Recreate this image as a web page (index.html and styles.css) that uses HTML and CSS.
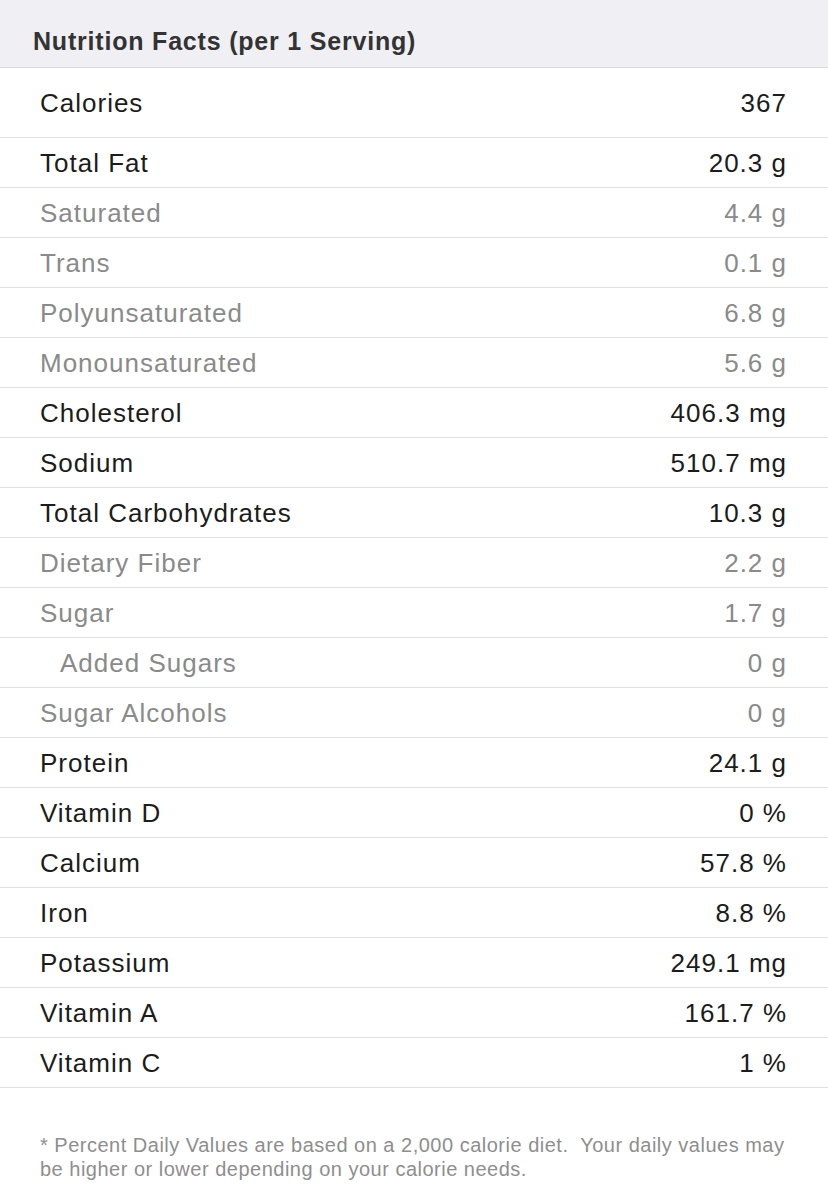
FILE: index.html
```html
<!DOCTYPE html>
<html>
<head>
<meta charset="utf-8">
<link rel="stylesheet" href="styles.css">
</head>
<body>
<div class="panel">
  <div class="header">Nutrition Facts (per 1 Serving)</div>
  <div class="row cal"><span>Calories</span><span>367</span></div>
  <div class="row"><span>Total Fat</span><span>20.3 g</span></div>
  <div class="row sub"><span>Saturated</span><span>4.4 g</span></div>
  <div class="row sub"><span>Trans</span><span>0.1 g</span></div>
  <div class="row sub"><span>Polyunsaturated</span><span>6.8 g</span></div>
  <div class="row sub"><span>Monounsaturated</span><span>5.6 g</span></div>
  <div class="row"><span>Cholesterol</span><span>406.3 mg</span></div>
  <div class="row"><span>Sodium</span><span>510.7 mg</span></div>
  <div class="row"><span>Total Carbohydrates</span><span>10.3 g</span></div>
  <div class="row sub"><span>Dietary Fiber</span><span>2.2 g</span></div>
  <div class="row sub"><span>Sugar</span><span>1.7 g</span></div>
  <div class="row sub indent"><span>Added Sugars</span><span>0 g</span></div>
  <div class="row sub"><span>Sugar Alcohols</span><span>0 g</span></div>
  <div class="row"><span>Protein</span><span>24.1 g</span></div>
  <div class="row"><span>Vitamin D</span><span>0 %</span></div>
  <div class="row"><span>Calcium</span><span>57.8 %</span></div>
  <div class="row"><span>Iron</span><span>8.8 %</span></div>
  <div class="row"><span>Potassium</span><span>249.1 mg</span></div>
  <div class="row"><span>Vitamin A</span><span>161.7 %</span></div>
  <div class="row"><span>Vitamin C</span><span>1 %</span></div>
  <p class="note">* Percent Daily Values are based on a 2,000 calorie diet.&nbsp; Your daily values may be higher or lower depending on your calorie needs.</p>
</div>
</body>
</html>
```
FILE: styles.css
```css
html, body {
  margin: 0;
  padding: 0;
  background: #ffffff;
}
.panel {
  width: 828px;
  font-family: "Liberation Sans", Arial, sans-serif;
}
.header {
  height: 68px;
  box-sizing: border-box;
  background: #efeff4;
  border-bottom: 1px solid #d9d9dc;
  padding: 16px 33px 0 33px;
  display: flex;
  align-items: center;
  font-size: 25px;
  font-weight: bold;
  letter-spacing: 0.8px;
  color: #333333;
}
.row {
  display: flex;
  justify-content: space-between;
  align-items: center;
  box-sizing: border-box;
  height: 50px;
  padding: 2px 41px 0 40px;
  border-bottom: 1px solid #e0e0e0;
  font-size: 26px;
  letter-spacing: 1px;
  color: #1c1c1c;
}
.row.cal {
  height: 70px;
}
.row.sub {
  color: #8a8a8a;
}
.row.indent {
  padding-left: 60px;
}
.note {
  margin: 0;
  padding: 45px 40px 0 40px;
  font-size: 20px;
  line-height: 24px;
  letter-spacing: 0.5px;
  color: #8e8e8e;
}
```
